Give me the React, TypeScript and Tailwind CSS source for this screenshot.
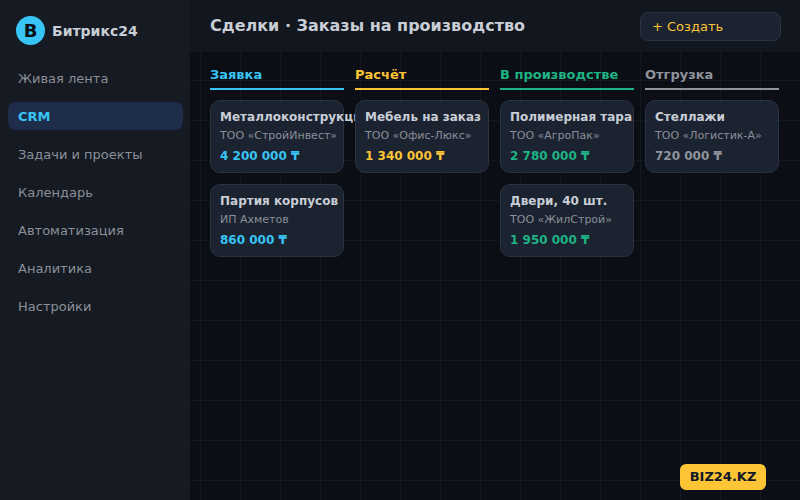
const navItems = ['Живая лента', 'CRM', 'Задачи и проекты', 'Календарь', 'Автоматизация', 'Аналитика', 'Настройки'];

type Deal = { title: string; client: string; sum: string };
type Column = { name: string; text: string; border: string; deals: Deal[] };

const columns: Column[] = [
	{
		name: 'Заявка',
		text: 'text-[#38c4f5]',
		border: 'border-[#38c4f5]',
		deals: [
			{ title: 'Металлоконструкции', client: 'ТОО «СтройИнвест»', sum: '4 200 000 ₸' },
			{ title: 'Партия корпусов', client: 'ИП Ахметов', sum: '860 000 ₸' },
		],
	},
	{
		name: 'Расчёт',
		text: 'text-[#fdc536]',
		border: 'border-[#fdc536]',
		deals: [{ title: 'Мебель на заказ', client: 'ТОО «Офис-Люкс»', sum: '1 340 000 ₸' }],
	},
	{
		name: 'В производстве',
		text: 'text-[#1fb385]',
		border: 'border-[#1fb385]',
		deals: [
			{ title: 'Полимерная тара', client: 'ТОО «АгроПак»', sum: '2 780 000 ₸' },
			{ title: 'Двери, 40 шт.', client: 'ТОО «ЖилСтрой»', sum: '1 950 000 ₸' },
		],
	},
	{
		name: 'Отгрузка',
		text: 'text-[#8f939c]',
		border: 'border-[#8f939c]',
		deals: [{ title: 'Стеллажи', client: 'ТОО «Логистик-А»', sum: '720 000 ₸' }],
	},
];

const App = () => {
	return (
		<div className="relative flex h-[500px] w-[800px] overflow-hidden bg-[#0b0e14] bg-[linear-gradient(rgba(120,150,200,0.07)_1px,transparent_1px),linear-gradient(90deg,rgba(120,150,200,0.07)_1px,transparent_1px)] bg-[size:40px_40px] font-['DejaVu_Sans',sans-serif] text-[#c9ced6]">
			<aside className="flex w-[190px] shrink-0 flex-col bg-[#151a23] pl-2 pr-[7px] pt-4">
				<div className="flex items-center gap-[7px] px-2">
					<div className="flex h-[29px] w-[29px] items-center justify-center rounded-full bg-[#38c4f5] text-[18px] font-bold text-[#0b0e14]">
						B
					</div>
					<span className="pt-[2px] text-[14px] font-bold">Битрикс24</span>
				</div>
				<nav className="mt-[19px] flex flex-col gap-[10px]">
					{navItems.map((item) =>
						item === 'CRM' ? (
							<div key={item} className="flex h-[28px] items-center rounded-lg bg-[#1e2d4a] px-2.5 pt-[2px] text-[13px] font-bold text-[#38c4f5]">
								{item}
							</div>
						) : (
							<div key={item} className="flex h-[28px] items-center px-2.5 pt-[2px] text-[13px] text-[#8a8f98]">
								{item}
							</div>
						)
					)}
				</nav>
			</aside>

			<div className="flex min-w-0 flex-1 flex-col">
				<header className="flex h-[52px] items-center justify-between bg-[#12161f] pl-5 pr-[19px]">
					<h1 className="text-[16px] font-bold">Сделки · Заказы на производство</h1>
					<button className="h-[29px] w-[141px] rounded-lg border border-[#2a3344] bg-[#1b2230] pl-[11px] pt-[1px] text-left text-[13px] text-[#fdc536]">
						+ Создать
					</button>
				</header>

				<main className="flex gap-[11px] pl-5 pt-[13px]">
					{columns.map((col) => (
						<section key={col.name} className="w-[134px]">
							<h2 className={`border-b-2 pb-[3px] text-[13px] font-bold ${col.text} ${col.border}`}>{col.name}</h2>
							<div className="mt-[10px] flex flex-col gap-[11px]">
								{col.deals.map((deal) => (
									<article key={deal.title} className="h-[73px] rounded-[10px] border border-[#2b3240] bg-[#1b2230] px-[9px] pt-[7px]">
										<div className="whitespace-nowrap text-[12px] font-bold">{deal.title}</div>
										<div className="mt-[2px] whitespace-nowrap text-[11px] text-[#8a8f98]">{deal.client}</div>
										<div className={`mt-[3px] whitespace-nowrap text-[12px] font-bold ${col.text}`}>{deal.sum}</div>
									</article>
								))}
							</div>
						</section>
					))}
				</main>
			</div>

			<div className="absolute bottom-[10px] right-[34px] flex h-[26px] w-[86px] items-center justify-center rounded-md bg-[#fdc536] text-[13px] font-bold text-[#111827]">
				BIZ24.KZ
			</div>
		</div>
	);
};

export default App;
